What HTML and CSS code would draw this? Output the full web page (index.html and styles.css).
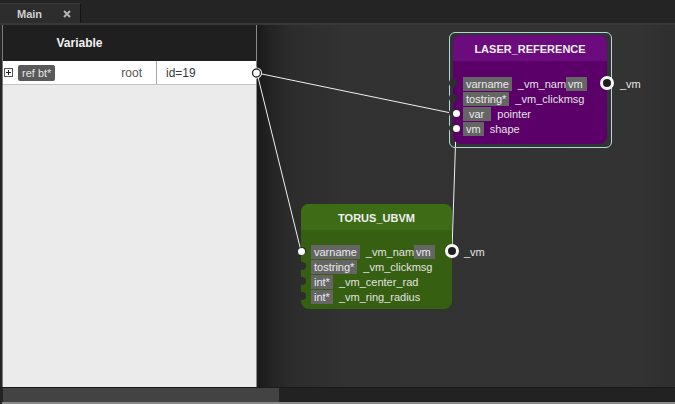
FILE: index.html
```html
<!DOCTYPE html>
<html>
<head>
<meta charset="utf-8">
<link rel="stylesheet" href="styles.css">
</head>
<body>
<div class="app">
  <div class="tabbar">
    <div class="tab">
      <span class="tab-title">Main</span>
      <svg class="tab-close" width="8" height="8" viewBox="0 0 8 8"><path d="M1 1L7 7M7 1L1 7" stroke="#b4b4b4" stroke-width="2"/></svg>
    </div>
  </div>
  <div class="workspace">
    <div class="varpanel">
      <div class="varhead"><span class="varhead-title">Variable</span><span></span></div>
      <div class="varrow">
        <div class="varcell">
          <span class="expander">
            <svg width="9" height="9" viewBox="0 0 9 9"><rect x="0.5" y="0.5" width="8" height="8" fill="#fff" stroke="#555"/><path d="M2 4.5H7M4.5 2V7" stroke="#222"/></svg>
          </span>
          <span class="reftag">ref bt*</span>
          <span class="varname">root</span>
        </div>
        <div class="varval">id=19</div>
      </div>
      <div class="varfill"></div>
    </div>
    <div class="canvas">
      <div class="selection sel-laser"></div>

      <div class="node node-laser">
        <div class="node-head">LASER_REFERENCE</div>
        <div class="node-body">
          <div class="prow"><span class="notch"></span><span class="tag">varname</span><span class="pval">_vm_nam</span><span class="tag tag-tight">vm</span><span class="outport"></span><span class="outlabel">_vm</span></div>
          <div class="prow"><span class="notch"></span><span class="tag">tostring*</span><span class="pval">_vm_clickmsg</span></div>
          <div class="prow"><span class="notch"></span><span class="indot"></span><span class="tag tag-wide">var</span><span class="pval">pointer</span></div>
          <div class="prow"><span class="notch"></span><span class="indot"></span><span class="tag">vm</span><span class="pval">shape</span></div>
        </div>
      </div>

      <div class="node node-torus">
        <div class="node-head">TORUS_UBVM</div>
        <div class="node-body">
          <div class="prow"><span class="notch"></span><span class="indot"></span><span class="tag">varname</span><span class="pval">_vm_nam</span><span class="tag tag-tight">vm</span><span class="outport"></span><span class="outlabel">_vm</span></div>
          <div class="prow"><span class="notch"></span><span class="tag">tostring*</span><span class="pval">_vm_clickmsg</span></div>
          <div class="prow"><span class="notch"></span><span class="tag">int*</span><span class="pval">_vm_center_rad</span></div>
          <div class="prow"><span class="notch"></span><span class="tag">int*</span><span class="pval">_vm_ring_radius</span></div>
        </div>
      </div>
    </div>
    <svg class="wires" width="675" height="362" viewBox="0 25 675 362">
      <path d="M257 73L456 114" stroke="#f0f0f0" stroke-width="1" fill="none"/>
      <path d="M257 73L301 251" stroke="#f0f0f0" stroke-width="1" fill="none"/>
      <path d="M456 129L452 250" stroke="#f0f0f0" stroke-width="1" fill="none"/>
    </svg>
    <svg class="ports" width="675" height="362" viewBox="0 25 675 362">
      <circle cx="256.5" cy="73" r="5.5" fill="#fff"/>
      <circle cx="256.5" cy="73" r="4" fill="#fff" stroke="#2a2a2a" stroke-width="1.4"/>
    </svg>
  </div>
  <div class="hscroll"><div class="hthumb"></div></div>
  <div class="bottomline"></div>
</div>
</body>
</html>
```

FILE: styles.css
```css
* { box-sizing: border-box; }
html, body { margin: 0; padding: 0; }
body {
  width: 675px;
  height: 404px;
  overflow: hidden;
  background: #262626;
  font-family: "Liberation Sans", Arial, sans-serif;
  font-size: 11px;
}
.app { display: flex; flex-direction: column; width: 675px; height: 404px; }

.tabbar {
  height: 25px;
  background: #242424;
  border-bottom: 2px solid #383838;
  display: flex;
  align-items: flex-end;
}
.tab {
  width: 81px;
  height: 20px;
  background: #2d2d2d;
  border-top: 1px solid #3a3a3a;
  border-right: 1px solid #141414;
  display: flex;
  align-items: center;
  padding-left: 17px;
}
.tab-title { color: #cfcfcf; font-weight: bold; font-size: 11px; }
.tab-close { margin-left: 21px; }

.workspace { position: relative; display: flex; height: 362px; }

.varpanel {
  width: 255px;
  margin-left: 2px;
  border-left: 1px solid #7a7a7a;
  border-right: 1px solid #8a8a8a;
  display: flex;
  flex-direction: column;
  background: #ebebeb;
  flex: none;
}
.varhead {
  height: 36px;
  background: #1f1f1f;
  display: grid;
  grid-template-columns: 153px 1fr;
  align-items: center;
}
.varhead-title { text-align: center; color: #f2f2f2; font-weight: bold; font-size: 12px; }
.varrow {
  height: 24px;
  background: #fff;
  border-bottom: 1px solid #c4c4c4;
  display: grid;
  grid-template-columns: 153px 1fr;
}
.varcell { display: flex; align-items: center; padding-left: 1px; }
.expander { display: flex; width: 9px; height: 9px; }
.reftag {
  margin-left: 5px;
  background: #595959;
  color: #e6e6e6;
  height: 16px;
  line-height: 16px;
  padding: 0 4px;
  border-radius: 2px;
  font-size: 11px;
}
.varname { margin-left: auto; padding-right: 14px; color: #555; font-size: 12px; }
.varval {
  border-left: 1px solid #a8a8a8;
  padding-left: 9px;
  display: flex;
  align-items: center;
  color: #3a3a3a;
  font-size: 12px;
}
.varfill { flex: 1; background: #ebebeb; }

.canvas {
  flex: 1;
  position: relative;
  background: linear-gradient(to right, #191919 0, #242424 14px, #2c2c2c 34px, #323232 90px, #333 380px, #2f2f2f 410px, #2f2f2f 100%);
}

.wires, .ports { position: absolute; left: 0; top: 0; pointer-events: none; }
.wires { z-index: 1; }
.ports { z-index: 4; }

.selection {
  position: absolute;
  border: 1px solid #a9dcd6;
  border-radius: 6px;
  z-index: 2;
}
.sel-laser { left: 192px; top: 7px; width: 163px; height: 116px; }

.node {
  position: absolute;
  border-radius: 8px;
  z-index: 3;
  display: flex;
  flex-direction: column;
  color: #e4e4e4;
}
.node-laser { left: 196px; top: 10px; width: 154px; height: 109px; background: #5b0068; }
.node-laser .node-head { background: #6c0b7d; }
.node-torus { left: 44px; top: 179px; width: 151px; height: 105px; background: #365f11; }
.node-torus .node-head { background: #3e6c16; }

.node-head {
  height: 26px;
  border-radius: 8px 8px 0 0;
  display: flex;
  align-items: center;
  justify-content: center;
  font-weight: bold;
  font-size: 11px;
  color: #f0f0f0;
  padding-top: 2px;
}
.node-body { padding: 15px 0 0 10px; }
.node-torus .node-body { padding-top: 14px; }
.prow { position: relative; height: 15px; display: flex; align-items: center; white-space: nowrap; }
.tag {
  background: #656565;
  color: #ececec;
  height: 14px;
  line-height: 14px;
  padding: 0 3px;
  font-size: 11px;
}
.tag-wide { padding: 0 7px 0 6px; }
.tag-tight { padding: 0 4px 0 2px; }
.pval { margin-left: 6px; color: #e2e2e2; font-size: 11px; }

.notch {
  position: absolute;
  left: -14px;
  top: 3px;
  width: 8px;
  height: 8px;
  border-radius: 50%;
  background: #2d2d2d;
}
.indot {
  position: absolute;
  left: -10px;
  top: 4px;
  width: 7px;
  height: 7px;
  border-radius: 50%;
  background: #fafafa;
}
.node-torus .notch { left: -13px; }
.node-torus .indot { left: -13px; }
.outport {
  position: absolute;
  top: 0;
  width: 14px;
  height: 14px;
  border-radius: 50%;
  border: 3px solid #fafafa;
  background: #1e1e1e;
}
.node-laser .outport { left: 137px; }
.node-torus .outport { left: 134px; }
.outlabel { position: absolute; color: #e6e6e6; font-size: 11px; }
.node-laser .outlabel { left: 157px; }
.node-torus .outlabel { left: 153px; }

.hscroll {
  height: 15px;
  background: #222;
  border-top: 1px solid #1a1a1a;
  display: flex;
  padding-left: 3px;
}
.hthumb { width: 276px; background: #434343; }
.bottomline { height: 2px; background: #8a8a8a; margin-left: 2px; }
```
